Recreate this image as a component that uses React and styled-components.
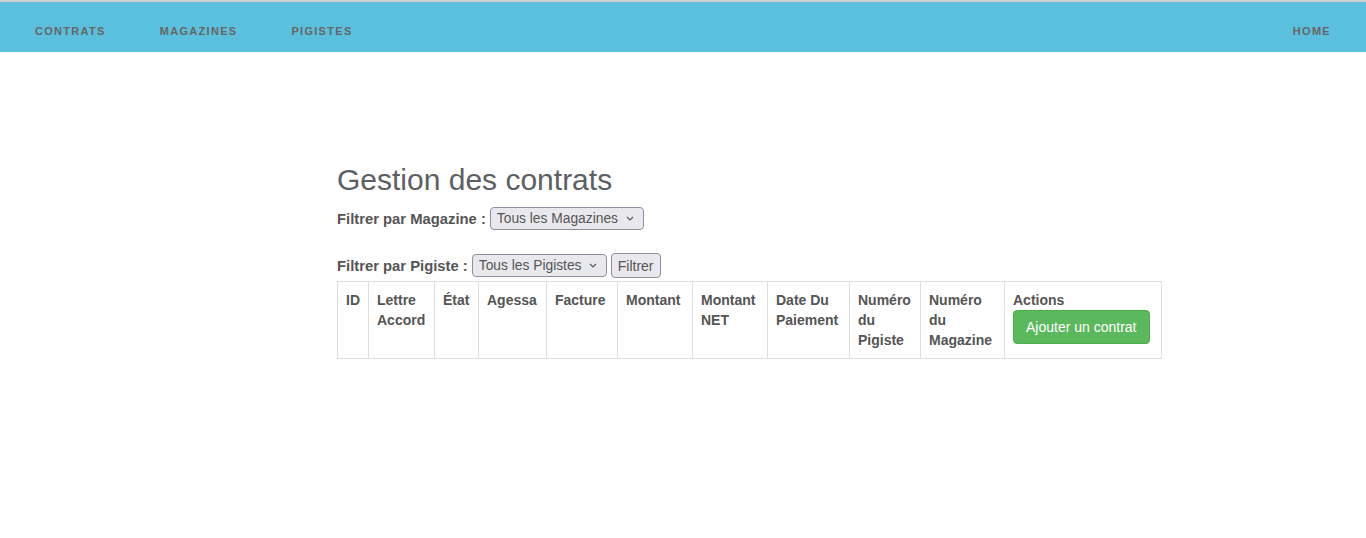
import styled, { createGlobalStyle } from "styled-components";

const GlobalStyle = createGlobalStyle`
	body {
		margin: 0;
		background: #fff;
		font-family: "Liberation Sans", Arial, sans-serif;
		font-size: 14px;
		line-height: 1.42857;
		color: #555;
	}
	* {
		box-sizing: border-box;
	}
`;

const columns = [
	{ label: "ID", width: 31 },
	{ label: "Lettre Accord", width: 66 },
	{ label: "État", width: 44 },
	{ label: "Agessa", width: 68 },
	{ label: "Facture", width: 71 },
	{ label: "Montant", width: 75 },
	{ label: "Montant NET", width: 75 },
	{ label: "Date Du Paiement", width: 82 },
	{ label: "Numéro du Pigiste", width: 71 },
	{ label: "Numéro du Magazine", width: 84 },
];

function Chevron() {
	return (
		<svg width='8' height='5' viewBox='0 0 8 5'>
			<path d='M1 1l3 3 3-3' fill='none' stroke='#555' strokeWidth='1.1' />
		</svg>
	);
}

function Dropdown({ children }) {
	return (
		<SelectWrap>
			<Select>
				<option>{children}</option>
			</Select>
			<ChevronBox>
				<Chevron />
			</ChevronBox>
		</SelectWrap>
	);
}

export default function App() {
	return (
		<>
			<GlobalStyle />
			<Navbar>
				<NavGroup>
					<NavLink>Contrats</NavLink>
					<NavLink>Magazines</NavLink>
					<NavLink>Pigistes</NavLink>
				</NavGroup>
				<NavGroup>
					<NavLink>Home</NavLink>
				</NavGroup>
			</Navbar>
			<Main>
				<Title>Gestion des contrats</Title>
				<FilterRow>
					<Label>Filtrer par Magazine :</Label>
					<Dropdown>Tous les Magazines</Dropdown>
				</FilterRow>
				<FilterRow $spaced>
					<Label>Filtrer par Pigiste :</Label>
					<Dropdown>Tous les Pigistes</Dropdown>
					<FilterButton>Filtrer</FilterButton>
				</FilterRow>
				<Table>
					<colgroup>
						{columns.map((c) => (
							<col key={c.label} style={{ width: c.width }} />
						))}
						<col style={{ width: 157 }} />
					</colgroup>
					<thead>
						<tr>
							{columns.map((c) => (
								<th key={c.label}>{c.label}</th>
							))}
							<th>
								Actions
								<AddButton>Ajouter un contrat</AddButton>
							</th>
						</tr>
					</thead>
					<tbody />
				</Table>
			</Main>
		</>
	);
}

const Navbar = styled.nav`
	display: flex;
	justify-content: space-between;
	height: 52px;
	padding: 0 35px 0 35px;
	background: #5bc0de;
	border-top: 2px solid #cfcfcf;
`;

const NavGroup = styled.div`
	display: flex;
	gap: 54px;
`;

const NavLink = styled.a`
	padding-top: 19px;
	line-height: 20px;
	font-size: 11px;
	font-weight: bold;
	letter-spacing: 1.3px;
	text-transform: uppercase;
	color: #666;
	cursor: pointer;
`;

const Main = styled.main`
	width: 824px;
	margin-left: 337px;
	padding-top: 111px;
`;

const Title = styled.h2`
	margin: 0 0 11px;
	font-size: 30px;
	font-weight: 500;
	line-height: 33px;
	color: #5c6064;
`;

const FilterRow = styled.div`
	display: flex;
	align-items: center;
	gap: 4px;
	height: 23px;
	margin-top: ${(p) => (p.$spaced ? "24px" : "0")};
`;

const Label = styled.label`
	font-size: 14.8px;
	font-weight: bold;
	line-height: 20px;
`;

const SelectWrap = styled.span`
	position: relative;
	display: inline-flex;
`;

const Select = styled.select`
	appearance: none;
	height: 23px;
	padding: 0 24px 0 6px;
	font-family: "Liberation Sans", Arial, sans-serif;
	font-size: 13.8px;
	color: #555;
	background: #e9e9ed;
	border: 1px solid #8f8f9d;
	border-radius: 4px;
`;

const ChevronBox = styled.span`
	position: absolute;
	right: 10px;
	top: 9px;
	display: flex;
	pointer-events: none;
`;

const FilterButton = styled.button`
	height: 25px;
	padding: 0 6px;
	font-family: "Liberation Sans", Arial, sans-serif;
	font-size: 14px;
	color: #555;
	background: #e9e9ed;
	border: 1px solid #8f8f9d;
	border-radius: 4px;
`;

const Table = styled.table`
	width: 824px;
	margin-top: 4px;
	table-layout: fixed;
	border-collapse: collapse;
	border: 1px solid #ddd;

	th {
		padding: 8px;
		text-align: left;
		vertical-align: top;
		font-weight: bold;
		line-height: 20px;
		border: 1px solid #ddd;
	}
`;

const AddButton = styled.button`
	display: block;
	padding: 6px 12px;
	font-family: "Liberation Sans", Arial, sans-serif;
	font-size: 14px;
	line-height: 20px;
	color: #fff;
	white-space: nowrap;
	background: #5cb85c;
	border: 1px solid #4cae4c;
	border-radius: 4px;
	cursor: pointer;
`;
